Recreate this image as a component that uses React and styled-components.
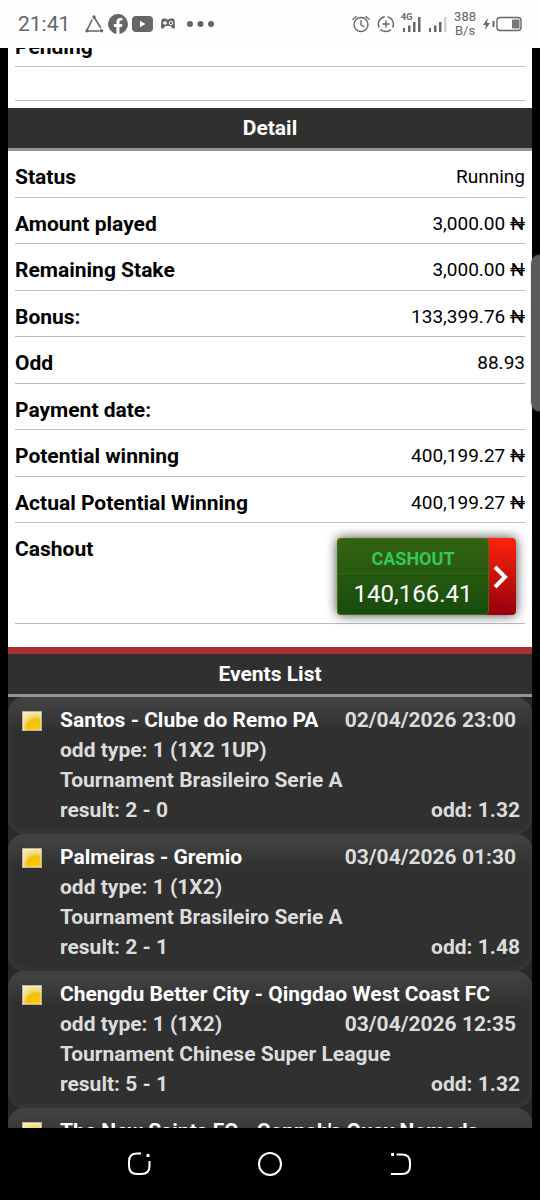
import React from "react";
import styled, { createGlobalStyle } from "styled-components";

const Global = createGlobalStyle`
  *, *::before, *::after { box-sizing: border-box; }
  body { margin: 0; background: #000; font-family: Roboto, "Liberation Sans", sans-serif; }
`;

const Screen = styled.div`
  display: flex;
  flex-direction: column;
  height: 100vh;
  background: #000;
`;

const StatusBar = styled.header`
  flex: none;
  display: flex;
  justify-content: space-between;
  align-items: center;
  height: 48px;
  padding: 0 18px;
  background: #fefefe;
  color: #666;
`;

const StatusGroup = styled.div`
  display: flex;
  align-items: center;
  gap: ${(p) => p.$gap}px;
  svg { display: block; flex: none; }
`;

const Clock = styled.time`
  margin-right: 11px;
  font-size: 21px;
  line-height: 24px;
`;

const NetSpeed = styled.div`
  font-size: 13px;
  line-height: 14px;
  text-align: center;
`;

const Viewport = styled.main`
  position: relative;
  flex: 1;
  min-height: 0;
  padding: 0 8px;
  overflow: hidden;
`;

const Slip = styled.div`
  margin-top: -27px;
  background: #fff;
  color: #000;
`;

const ScrollHandle = styled.div`
  position: absolute;
  top: 207px;
  right: 0;
  width: 9px;
  height: 156px;
  border-radius: 9px 0 0 9px;
  background: #5b5b5b;
  box-shadow: 0 0 2px #aaa;
`;

const Rows = styled.dl`
  display: grid;
  margin: 0;
  padding: 0 7px;
`;

const DetailRows = styled(Rows)`
  grid-auto-rows: 1fr;
  min-height: 372px;
`;

const Row = styled.div`
  display: flex;
  justify-content: space-between;
  align-items: flex-start;
  min-height: 46px;
  padding-top: 14px;
  border-bottom: 1px solid #bdbdbd;
`;

const BlankRow = styled(Row)`
  min-height: 34px;
`;

const Label = styled.dt`
  font-size: 21px;
  line-height: 24px;
  font-weight: 700;
`;

const Value = styled.dd`
  margin: 0;
  font-size: 19px;
  line-height: 24px;
`;

const SectionTitle = styled.h2`
  margin: 0;
  padding: 8px 0;
  border-top: ${(p) => (p.$accent ? "7px solid #a83232" : "0")};
  border-bottom: 3px solid #979393;
  background: #303030;
  color: #fff;
  font-size: 21px;
  line-height: 24px;
  font-weight: 700;
  text-align: center;
`;

const CashoutRow = styled(Row)`
  min-height: 101px;
  padding-right: 9px;
`;

const CashoutButton = styled.button`
  display: flex;
  width: 179px;
  height: 77px;
  margin: 1px 0 0;
  padding: 0;
  border: 0;
  border-radius: 4px;
  background: linear-gradient(#ff230c, #95000c);
  box-shadow: 0 0 12px rgba(0, 0, 0, 0.75);
  color: #fff;
  font-family: inherit;
  text-align: center;
`;

const CashoutBody = styled.span`
  flex: 1;
  display: flex;
  flex-direction: column;
  height: 100%;
  border: 1px solid #3d7212;
  border-radius: 4px;
  background: linear-gradient(#346310, #164c0e);
`;

const CashoutTitle = styled.span`
  padding: 8px 0 2px;
  border-bottom: 1px solid #2d6c18;
  color: #36c75c;
  font-size: 18px;
  line-height: 24px;
  font-weight: 700;
`;

const CashoutAmount = styled.span`
  padding-top: 6px;
  font-size: 24px;
  line-height: 28px;
`;

const CashoutArrow = styled.span`
  display: flex;
  align-items: center;
  justify-content: center;
  width: 27px;
  height: 100%;
  padding-right: 4px;
`;

const SlipSpacer = styled.div`
  height: ${(p) => p.$size}px;
`;

const Events = styled.ul`
  margin: 0;
  padding: 0;
  background: #292929;
  list-style: none;
`;

const EventCard = styled.li`
  display: flex;
  align-items: flex-start;
  gap: 18px;
  min-height: 137px;
  padding: 8px 12px 8px 14px;
  border-radius: 16px;
  background: linear-gradient(#464646, #303030 34px);
  box-shadow: inset 0 0 9px #3d3d3d;
  color: #dcdcdc;
  font-size: 21px;
  line-height: 30px;
  font-weight: 700;
`;

const Marker = styled.span`
  flex: none;
  width: 20px;
  height: 20px;
  margin-top: 6px;
  border: 1px solid #b5b2a6;
  box-shadow: inset 0 0 2px #fff;
  background: radial-gradient(circle at 75% 95%, #ffc800 0 10%, #f1bf0a 45%, #f0d873 58%, #fff3c4 100%);
`;

const EventBody = styled.div`
  flex: 1;
  min-width: 0;
`;

const EventLine = styled.div`
  display: flex;
  justify-content: space-between;
  white-space: nowrap;
`;

const Teams = styled.span`
  color: #fff;
`;

const DateTime = styled.time`
  padding-right: 4px;
`;

const NavBar = styled.nav`
  flex: none;
  display: flex;
  align-items: center;
  justify-content: space-between;
  height: 72px;
  padding: 0 23.5%;
`;

const NavButton = styled.button`
  display: flex;
  padding: 0;
  border: 0;
  background: none;
  color: #fff;
`;

const notices = (
  <>
    <svg width="19" height="18" viewBox="0 0 19 18" fill="none" stroke="currentColor" strokeWidth="1.6" strokeLinecap="round">
      <path d="M9 2 L15.5 12.5M7 5 L2.5 14M3 16 H14" />
      <g fill="currentColor" stroke="none">
        <circle cx="9" cy="2" r="1.7" /><circle cx="2" cy="15.7" r="1.7" /><circle cx="16.5" cy="15.7" r="1.7" />
      </g>
    </svg>
    <svg width="20" height="20" viewBox="0 0 24 24" fill="currentColor">
      <path d="M24 12a12 12 0 1 0-13.9 11.9v-8.4H7V12h3.100V9.400c0-3 1.800-4.700 4.500-4.700 1.300 0 2.700.2 2.700.2v3h-1.500c-1.500 0-2 .9-2 1.900V12h3.400l-.5 3.500h-2.900v8.400A12 12 0 0 0 24 12z" />
    </svg>
    <svg width="21" height="16" viewBox="0 0 21 16">
      <rect width="21" height="16" rx="4" fill="currentColor" /><path d="M8 4.800 L13.500 8 L8 11.200z" fill="#fff" />
    </svg>
  </>
);

const gamepad = (
  <svg width="24" height="12" viewBox="-3 0 24 12">
    <path d="M3 0.500h3l1 1h2l1-1h3c1 0 1.500.8 1.600 2l.4 6c.1 2.200-1.500 2.800-2.500 1.700L10.500 8h-5L3.500 10.200C2.500 11.300.9 10.700 1 8.500l.4-6c.1-1.200.6-2 1.600-2z" fill="currentColor" />
    <path d="M5 3v4M3 5h4" stroke="#fff" strokeWidth="1.300" />
    <circle cx="11" cy="5" r="1.700" fill="none" stroke="#fff" strokeWidth="1" />
  </svg>
);

const dots = (
  <svg width="30" height="6" viewBox="0 0 30 6" fill="currentColor">
    <circle cx="5" cy="3" r="3" /><circle cx="15.500" cy="3" r="3" /><circle cx="26" cy="3" r="3" />
  </svg>
);

const alarm = (
  <svg width="18" height="18" viewBox="0 0 18 18" fill="none" stroke="currentColor" strokeWidth="1.400" strokeLinecap="round">
    <circle cx="9" cy="9.500" r="7" /><path d="M9 5.800v4l2.800 1.700M1 4.200 4.200 1.500M17 4.200 13.800 1.500" />
  </svg>
);

const dataSaver = (
  <svg width="18" height="18" viewBox="0 0 18 18" fill="none" stroke="currentColor" strokeWidth="1.400">
    <path d="M10.500 1.900A7.400 7.400 0 0 1 15.500 12.600M14 14.500A7.400 7.400 0 0 1 3.500 14.200M2.300 12.500A7.400 7.400 0 0 1 7.800 1.700M9 5.500v7M5.500 9h7" />
  </svg>
);

const SignalBox = styled.span`
  position: relative;
  display: block;
`;

const Generation = styled.span`
  position: absolute;
  top: -4px;
  left: -1px;
  font-size: 9px;
  line-height: 9px;
  font-weight: 700;
`;

function Signal({ label, lastBar }) {
  return (
    <SignalBox>
      {label && <Generation>{label}</Generation>}
      <svg width="19" height="15" viewBox="0 0 19 15" fill="currentColor">
        <rect x="1" y="11" width="2" height="4" />
        <rect x="6" y="8.500" width="2.500" height="6.500" />
        <rect x="11" y="5" width="2.500" height="10" />
        <rect x="16" y="0" width="2.500" height="15" fill={lastBar} />
      </svg>
    </SignalBox>
  );
}

const battery = (
  <svg width="39" height="16" viewBox="0 0 39 16">
    <path d="M5 2 L0 9h3l-1 5 5-7H4z" fill="currentColor" />
    <path d="M10.500 5v6" stroke="currentColor" strokeWidth="2" />
    <rect x="14" y="1.500" width="24" height="13" rx="3" fill="none" stroke="currentColor" strokeWidth="1.400" />
    <rect x="29" y="3.500" width="7.500" height="9" rx="1" fill="#777" />
  </svg>
);

const details = [
  { label: "Status", value: "Running" },
  { label: "Amount played", value: "3,000.00 ₦" },
  { label: "Remaining Stake", value: "3,000.00 ₦" },
  { label: "Bonus:", value: "133,399.76 ₦" },
  { label: "Odd", value: "88.93" },
  { label: "Payment date:", value: "" },
  { label: "Potential winning", value: "400,199.27 ₦" },
  { label: "Actual Potential Winning", value: "400,199.27 ₦" },
];

const events = [
  { teams: "Santos - Clube do Remo PA", date: "02/04/2026 23:00", type: "1 (1X2 1UP)", cup: "Brasileiro Serie A", result: "2 - 0", odd: "1.32" },
  { teams: "Palmeiras - Gremio", date: "03/04/2026 01:30", type: "1 (1X2)", cup: "Brasileiro Serie A", result: "2 - 1", odd: "1.48" },
  { teams: "Chengdu Better City - Qingdao West Coast FC", date: "03/04/2026 12:35", type: "1 (1X2)", cup: "Chinese Super League", result: "5 - 1", odd: "1.32", long: true },
  { teams: "The New Saints FC - Connah's Quay Nomads" },
];

function Event({ event }) {
  const date = <DateTime>{event.date}</DateTime>;
  return (
    <EventCard>
      <Marker />
      <EventBody>
        <EventLine>
          <Teams>{event.teams}</Teams>
          {event.date && !event.long && date}
        </EventLine>
        {event.type && (
          <>
            <EventLine>
              <span>odd type: {event.type}</span>
              {event.long && date}
            </EventLine>
            <EventLine>Tournament {event.cup}</EventLine>
            <EventLine>
              <span>result: {event.result}</span>
              <span>odd: {event.odd}</span>
            </EventLine>
          </>
        )}
      </EventBody>
    </EventCard>
  );
}

export default function App() {
  return (
    <>
      <Global />
      <Screen>
        <StatusBar>
          <StatusGroup $gap={4}>
            <Clock>21:41</Clock>
            {notices}
            {gamepad}
            {dots}
          </StatusGroup>
          <StatusGroup $gap={7}>
            {alarm}
            {dataSaver}
            <Signal label="4G" lastBar="currentColor" />
            <Signal lastBar="#d0d0d0" />
            <NetSpeed>388<br />B/s</NetSpeed>
            {battery}
          </StatusGroup>
        </StatusBar>
        <Viewport>
          <Slip>
            <Rows>
              <Row>
                <Label>Pending</Label>
                <Value />
              </Row>
              <BlankRow />
            </Rows>
            <SlipSpacer $size={7} />
            <SectionTitle>Detail</SectionTitle>
            <DetailRows>
              {details.map((d) => (
                <Row key={d.label}>
                  <Label>{d.label}</Label>
                  <Value>{d.value}</Value>
                </Row>
              ))}
            </DetailRows>
            <Rows>
              <CashoutRow>
                <Label>Cashout</Label>
                <Value>
                  <CashoutButton type="button">
                    <CashoutBody>
                      <CashoutTitle>CASHOUT</CashoutTitle>
                      <CashoutAmount>140,166.41</CashoutAmount>
                    </CashoutBody>
                    <CashoutArrow>
                      <svg width="17" height="24" viewBox="0 0 17 24" fill="none" stroke="#fff" strokeWidth="4">
                        <path d="M3 2 L13 12 L3 22" />
                      </svg>
                    </CashoutArrow>
                  </CashoutButton>
                </Value>
              </CashoutRow>
            </Rows>
            <SlipSpacer $size={23} />
            <SectionTitle $accent>Events List</SectionTitle>
            <Events>
              {events.map((e) => (
                <Event key={e.teams} event={e} />
              ))}
            </Events>
          </Slip>
          <ScrollHandle />
        </Viewport>
        <NavBar>
          <NavButton aria-label="Recent apps">
            <svg width="26" height="26" viewBox="0 0 26 26" fill="none" stroke="currentColor" strokeWidth="2">
              <path d="M14 2.500H10Q2 2.500 2 10.500V15Q2 23 10 23H14.500Q22.500 23 22.500 15V10" />
              <path d="M19.500 4.500h3" strokeWidth="3" />
            </svg>
          </NavButton>
          <NavButton aria-label="Home">
            <svg width="26" height="26" viewBox="0 0 26 26" fill="none" stroke="currentColor" strokeWidth="2">
              <circle cx="13" cy="13" r="11" />
            </svg>
          </NavButton>
          <NavButton aria-label="Back">
            <svg width="26" height="26" viewBox="0 0 26 26" fill="none" stroke="currentColor" strokeWidth="2">
              <path d="M9.500 3.500H15Q23 3.500 23 11.500V15Q23 23 15 23H4" />
              <path d="M4 3.500h3" strokeWidth="3" />
            </svg>
          </NavButton>
        </NavBar>
      </Screen>
    </>
  );
}
